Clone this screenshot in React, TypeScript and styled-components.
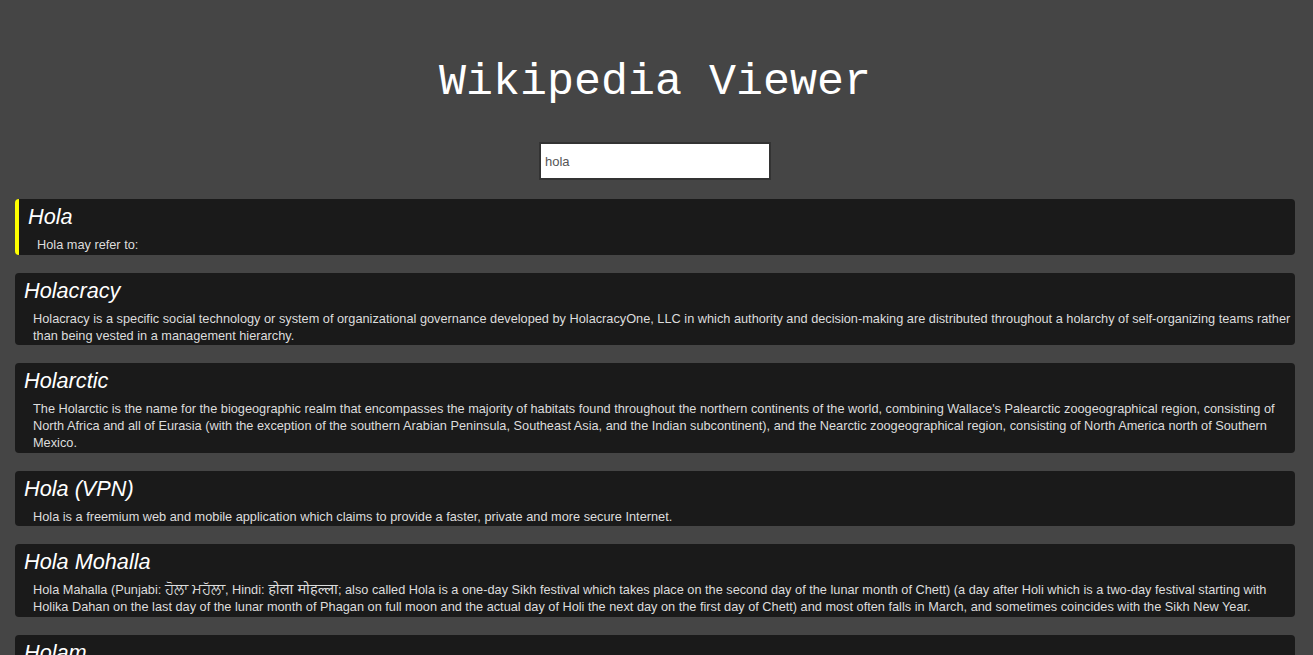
import React from "react";
import styled, { createGlobalStyle } from "styled-components";

const GlobalStyle = createGlobalStyle`
  html, body {
    margin: 0;
    padding: 0;
    background: #454545;
    overflow: hidden;
  }
  body {
    font-family: "Liberation Sans", Arial, sans-serif;
  }
`;

const Page = styled.div`
  min-height: 655px;
  background: #454545;
  padding: 60px 18px 20px 15px;
  box-sizing: border-box;
`;

const Header = styled.header`
  display: flex;
  flex-direction: column;
  align-items: center;
`;

const Title = styled.h1`
  margin: 0;
  font-family: "Liberation Mono", "Courier New", monospace;
  font-weight: normal;
  font-size: 45px;
  line-height: 45px;
  color: #ffffff;
`;

const SearchInput = styled.input`
  margin-top: 37px;
  width: 232px;
  height: 38px;
  box-sizing: border-box;
  border: 2px solid #333333;
  background: #ffffff;
  padding: 0 4px;
  font-family: "Liberation Sans", Arial, sans-serif;
  font-size: 13px;
  color: #555555;
  outline: none;
`;

const Results = styled.div`
  display: flex;
  flex-direction: column;
  gap: 18px;
  margin-top: 19px;
`;

const Card = styled.div<{ $active?: boolean }>`
  background: #1a1a1a;
  border-radius: 4px;
  border-left: ${(p) => (p.$active ? "4px solid #ffff00" : "0")};
  padding: 4px 4px 1.5px 9px;
`;

const CardTitle = styled.h2`
  margin: 0 0 5px;
  font-family: "Liberation Sans", Arial, sans-serif;
  font-style: italic;
  font-weight: normal;
  font-size: 21.7px;
  line-height: 28px;
  color: #ffffff;
`;

const CardText = styled.p`
  margin: 0;
  padding-left: 9px;
  font-family: "Liberation Sans", Arial, "Noto Sans", sans-serif;
  font-size: 12.75px;
  line-height: 17px;
  color: #dddddd;
`;

const Native = styled.span`
  font-size: 14.6px;
  line-height: 1;
`;

type Result = { title: string; text: React.ReactNode; active?: boolean };

const results: Result[] = [
  { title: "Hola", text: "Hola may refer to:", active: true },
  {
    title: "Holacracy",
    text: "Holacracy is a specific social technology or system of organizational governance developed by HolacracyOne, LLC in which authority and decision-making are distributed throughout a holarchy of self-organizing teams rather than being vested in a management hierarchy.",
  },
  {
    title: "Holarctic",
    text: "The Holarctic is the name for the biogeographic realm that encompasses the majority of habitats found throughout the northern continents of the world, combining Wallace's Palearctic zoogeographical region, consisting of North Africa and all of Eurasia (with the exception of the southern Arabian Peninsula, Southeast Asia, and the Indian subcontinent), and the Nearctic zoogeographical region, consisting of North America north of Southern Mexico.",
  },
  {
    title: "Hola (VPN)",
    text: "Hola is a freemium web and mobile application which claims to provide a faster, private and more secure Internet.",
  },
  {
    title: "Hola Mohalla",
    text: (
      <>
        Hola Mahalla (Punjabi: <Native>ਹੋਲਾ ਮਹੱਲਾ</Native>, Hindi: <Native>होला मोहल्ला</Native>; also called Hola is a
        one-day Sikh festival which takes place on the second day of the lunar month of Chett) (a day after Holi which
        is a two-day festival starting with Holika Dahan on the last day of the lunar month of Phagan on full moon and
        the actual day of Holi the next day on the first day of Chett) and most often falls in March, and sometimes
        coincides with the Sikh New Year.
      </>
    ),
  },
  {
    title: "Holam",
    text: "Holam is a Hebrew niqqud vowel sign represented by a dot above the upper left corner of the consonant letter.",
  },
];

export default function App() {
  return (
    <>
      <GlobalStyle />
      <Page>
        <Header>
          <Title>Wikipedia Viewer</Title>
          <SearchInput defaultValue="hola" />
        </Header>
        <Results>
          {results.map((r) => (
            <Card key={r.title} $active={r.active}>
              <CardTitle>{r.title}</CardTitle>
              <CardText>{r.text}</CardText>
            </Card>
          ))}
        </Results>
      </Page>
    </>
  );
}
